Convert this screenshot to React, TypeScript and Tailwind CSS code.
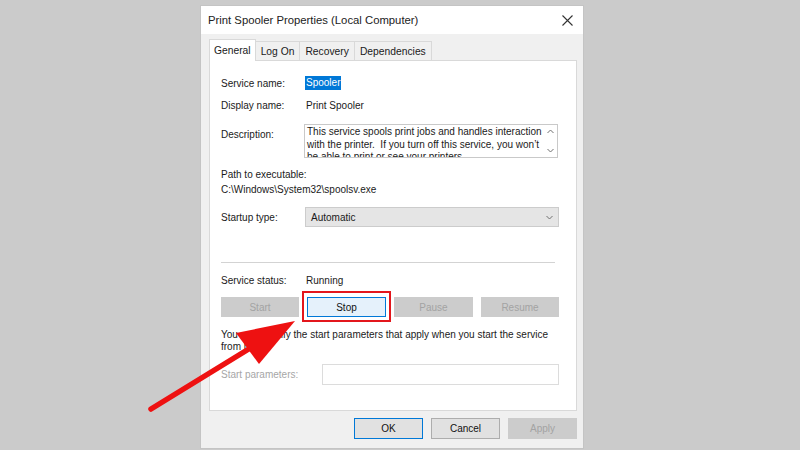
const font = "font-['Liberation_Sans',Arial,sans-serif]"

function Chevron({ up }: { up?: boolean }) {
  return (
    <svg width="7" height="5" viewBox="0 0 7 5" className="block">
      <path
        d={up ? 'M0.5 4 L3.5 1 L6.5 4' : 'M0.5 1 L3.5 4 L6.5 1'}
        fill="none"
        stroke="#707070"
        strokeWidth="1"
      />
    </svg>
  )
}

function Btn({ label, kind }: { label: string; kind: 'off' | 'on' | 'default' | 'normal' }) {
  const styles = {
    off: 'bg-[#cccccc] border-[#cccccc] text-[#a3a3a3]',
    on: 'bg-[#e5f1fb] border-[#0078d7] text-[#111]',
    default: 'bg-[#e1e1e1] border-[#0078d7] text-[#111]',
    normal: 'bg-[#e1e1e1] border-[#adadad] text-[#111]',
  }[kind]
  return (
    <div className={`flex h-full w-full items-center justify-center border ${styles}`}>{label}</div>
  )
}

export default function App() {
  return (
    <div className={`relative h-[450px] w-[800px] overflow-hidden bg-[#cbcbcb] text-[10px] text-[#1a1a1a] ${font}`}>
      <div className="ml-[200px] mt-[5px] h-[444px] w-[384px] border border-[#c4c4c4] bg-[#f0f0f0]">
        {/* title bar */}
        <div className="flex h-[28px] items-center justify-between bg-white pl-[7px] pr-[10px]">
          <span className="text-[11.3px] text-[#222]">Print Spooler Properties (Local Computer)</span>
          <svg width="11" height="11" viewBox="0 0 11 11">
            <path d="M0.5 0.5 L10.5 10.5 M10.5 0.5 L0.5 10.5" stroke="#333" strokeWidth="1.1" />
          </svg>
        </div>

        <div className="pl-[8px] pr-[6px]">
          {/* tabs */}
          <div className="mt-[6px] flex h-[20px] items-end text-[10.3px]">
            <div className="relative z-10 -mb-px flex h-[22px] items-center border border-b-0 border-[#d9d9d9] bg-white px-[4px] pt-[1px]">
              General
            </div>
            <div className="flex h-[19px] items-center border border-l-0 border-b-0 border-[#d9d9d9] bg-[#f0f0f0] px-[5px] pt-[1px]">
              Log On
            </div>
            <div className="flex h-[19px] items-center border border-l-0 border-b-0 border-[#d9d9d9] bg-[#f0f0f0] px-[5px] pt-[1px]">
              Recovery
            </div>
            <div className="flex h-[19px] items-center border border-l-0 border-b-0 border-[#d9d9d9] bg-[#f0f0f0] px-[5px] pt-[1px]">
              Dependencies
            </div>
          </div>

          {/* panel */}
          <div className="h-[351px] w-[368px] border border-[#d9d9d9] bg-white pl-[11px] pt-[14px]">
            <div className="flex h-[16px] items-center">
              <div className="w-[84px]">Service name:</div>
              <span className="bg-[#0078d7] px-px leading-[14px] text-white">Spooler</span>
            </div>
            <div className="mt-[6px] flex h-[16px] items-center">
              <div className="w-[85px]">Display name:</div>
              <div>Print Spooler</div>
            </div>

            <div className="mt-[11px] flex">
              <div className="w-[83px] pt-[3px]">Description:</div>
              <div className="relative h-[34px] w-[254px] overflow-hidden border border-[#c9c9c9] pl-[2px] pt-px leading-[12.5px]">
                <div>This service spools print jobs and handles interaction</div>
                <div>{'with the printer.\u00a0 If you turn off this service, you won\u2019t'}</div>
                <div>be able to print or see your printers.</div>
                <div className="absolute right-0 top-0 flex h-full w-[14px] flex-col items-center justify-between bg-white py-[4px]">
                  <Chevron up />
                  <Chevron />
                </div>
              </div>
            </div>

            <div className="mt-[9px] h-[15px] leading-[15px]">Path to executable:</div>
            <div className="h-[15px] leading-[15px]">C:\Windows\System32\spoolsv.exe</div>

            <div className="mt-[10px] flex items-center">
              <div className="w-[84px]">Startup type:</div>
              <div className="flex h-[20px] w-[254px] items-center justify-between border border-[#cccccc] bg-[#e5e5e5] pl-[5px] pr-[5px]">
                <span>Automatic</span>
                <Chevron />
              </div>
            </div>

            <div className="mt-[35px] h-px w-[334px] bg-[#d3d3d3]" />

            <div className="mt-[9px] flex h-[16px] items-center">
              <div className="w-[85px]">Service status:</div>
              <div>Running</div>
            </div>

            <div className="mt-[9px] flex h-[20px] w-[338px] justify-between">
              <div className="w-[78px]">
                <Btn label="Start" kind="off" />
              </div>
              <div className="relative w-[79px]">
                <Btn label="Stop" kind="on" />
                <div className="absolute -bottom-[5px] -left-[5px] -right-[5px] -top-[6px] border-[2.5px] border-[#e3161c]" />
              </div>
              <div className="w-[79px]">
                <Btn label="Pause" kind="off" />
              </div>
              <div className="w-[78px]">
                <Btn label="Resume" kind="off" />
              </div>
            </div>

            <div className="mt-[12px] leading-[12px]">
              <div>You can specify the start parameters that apply when you start the service</div>
              <div>from here.</div>
            </div>

            <div className="mt-[11px] flex items-center">
              <div className="w-[101px] text-[#a6a6a6]">Start parameters:</div>
              <div className="h-[21px] w-[237px] border border-[#dcdcdc] bg-white" />
            </div>
          </div>

          {/* dialog buttons */}
          <div className="mt-[7px] flex justify-end gap-[8px]">
            <div className="h-[21px] w-[69px]">
              <Btn label="OK" kind="default" />
            </div>
            <div className="h-[21px] w-[69px]">
              <Btn label="Cancel" kind="normal" />
            </div>
            <div className="h-[21px] w-[69px]">
              <Btn label="Apply" kind="off" />
            </div>
          </div>
        </div>
      </div>

      {/* red arrow */}
      <svg className="pointer-events-none absolute left-0 top-0" width="800" height="450" viewBox="0 0 800 450">
        <path d="M151 409 L252 347" stroke="#ee1111" strokeWidth="5.5" strokeLinecap="round" />
        <path d="M295 321 L236 333 L259 364 Z" fill="#ee1111" />
      </svg>
    </div>
  )
}
